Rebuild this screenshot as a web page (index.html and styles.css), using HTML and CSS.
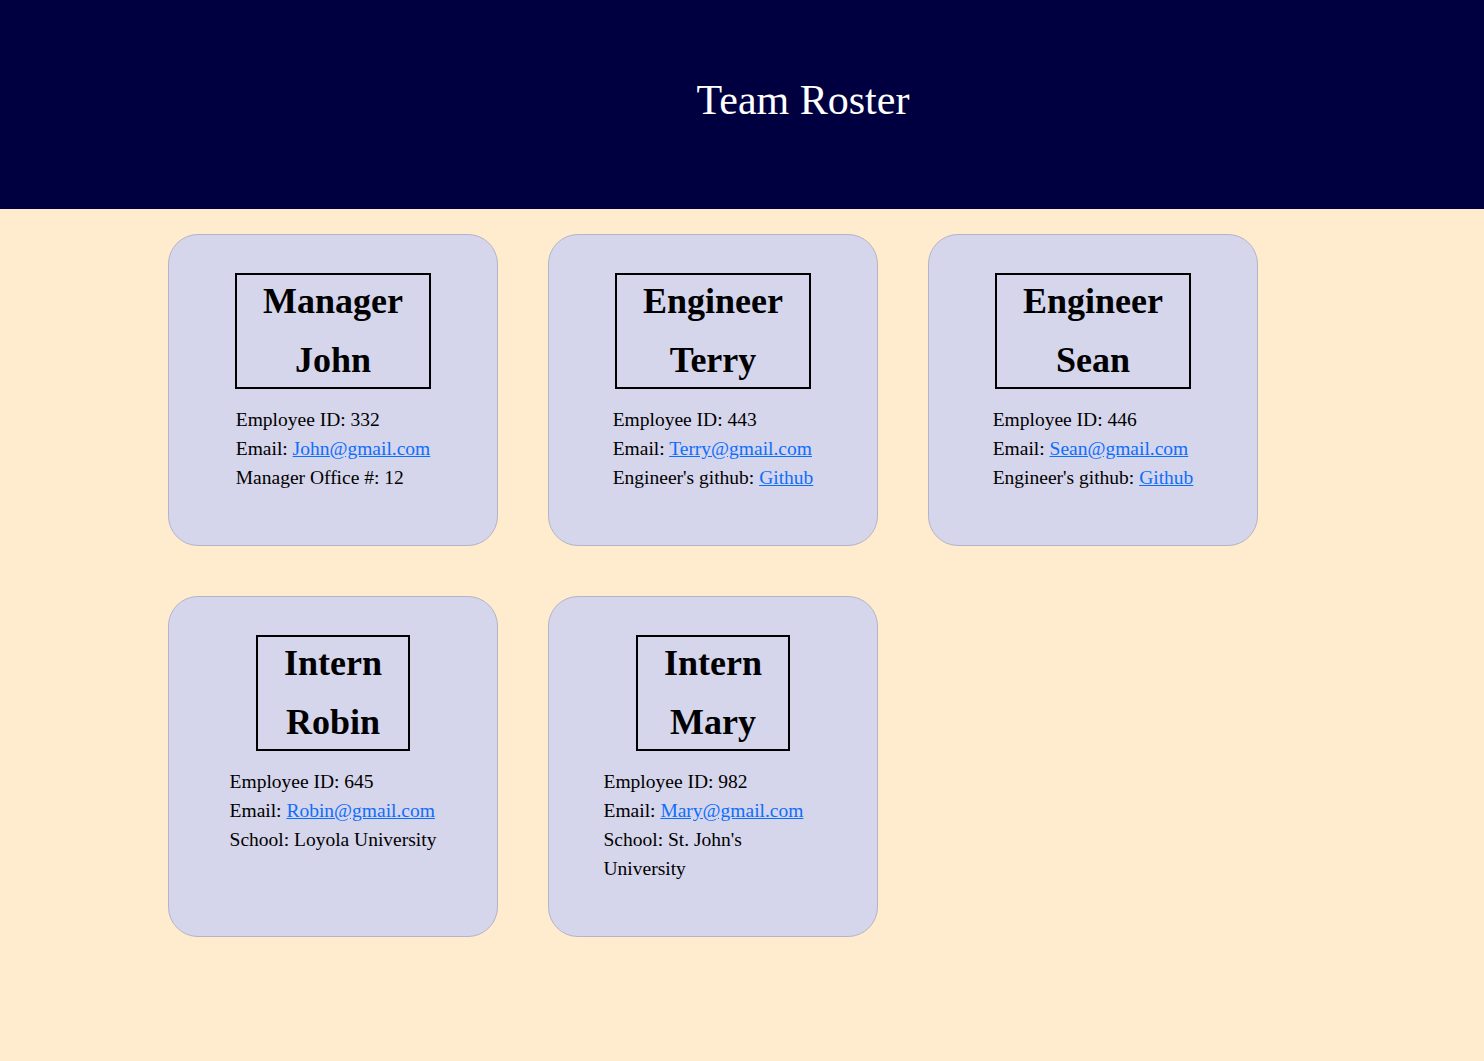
FILE: index.html
```html
<!DOCTYPE html>
<html lang="en">
<head>
<meta charset="utf-8">
<title>Team Roster</title>
<link rel="stylesheet" href="styles.css">
</head>
<body>
<header class="banner">
  <h1 class="banner-title">Team Roster</h1>
</header>
<main class="roster">
  <section class="card">
    <div class="role-box">
      <h2 class="role-line">Manager</h2>
      <h2 class="role-line">John</h2>
    </div>
    <ul class="details">
      <li>Employee ID: 332</li>
      <li>Email: <a href="mailto:John@gmail.com">John@gmail.com</a></li>
      <li>Manager Office #: 12</li>
    </ul>
  </section>
  <section class="card">
    <div class="role-box">
      <h2 class="role-line">Engineer</h2>
      <h2 class="role-line">Terry</h2>
    </div>
    <ul class="details">
      <li>Employee ID: 443</li>
      <li>Email: <a href="mailto:Terry@gmail.com">Terry@gmail.com</a></li>
      <li>Engineer's github: <a href="#">Github</a></li>
    </ul>
  </section>
  <section class="card">
    <div class="role-box">
      <h2 class="role-line">Engineer</h2>
      <h2 class="role-line">Sean</h2>
    </div>
    <ul class="details">
      <li>Employee ID: 446</li>
      <li>Email: <a href="mailto:Sean@gmail.com">Sean@gmail.com</a></li>
      <li>Engineer's github: <a href="#">Github</a></li>
    </ul>
  </section>
  <section class="card">
    <div class="role-box">
      <h2 class="role-line">Intern</h2>
      <h2 class="role-line">Robin</h2>
    </div>
    <ul class="details">
      <li>Employee ID: 645</li>
      <li>Email: <a href="mailto:Robin@gmail.com">Robin@gmail.com</a></li>
      <li>School: Loyola University</li>
    </ul>
  </section>
  <section class="card">
    <div class="role-box">
      <h2 class="role-line">Intern</h2>
      <h2 class="role-line">Mary</h2>
    </div>
    <ul class="details">
      <li>Employee ID: 982</li>
      <li>Email: <a href="mailto:Mary@gmail.com">Mary@gmail.com</a></li>
      <li>School: St. John's University</li>
    </ul>
  </section>
</main>
</body>
</html>
```

FILE: styles.css
```css
html, body {
  margin: 0;
  padding: 0;
}

body {
  background: #ffebcd;
  font-family: "Liberation Serif", "Times New Roman", serif;
  color: #000;
  min-height: 1061px;
}

.banner {
  background: #000040;
  height: 209px;
  box-sizing: border-box;
  padding: 76px 0 0 122px;
  text-align: center;
}

.banner-title {
  margin: 0;
  font-weight: normal;
  font-size: 42px;
  line-height: 48px;
  color: #fff;
}

.roster {
  display: grid;
  grid-template-columns: repeat(3, 330px);
  column-gap: 50px;
  row-gap: 50px;
  padding: 25px 0 0 168px;
}

.card {
  background: #d5d5eb;
  border: 1px solid #b4b4c8;
  border-radius: 30px;
  padding: 38px 10px 53px;
  display: flex;
  flex-direction: column;
  align-items: center;
}

.role-box {
  border: 2px solid #000;
  padding: 0 26px;
  height: 112px;
  text-align: center;
}

.role-line {
  margin: 0;
  font-size: 36px;
  font-weight: bold;
  line-height: 59px;
}

.role-line:first-child {
  margin-top: -3px;
}

.details {
  list-style: none;
  margin: 16px 0 0;
  padding: 0;
  width: fit-content;
  max-width: 219px;
  font-size: 19.5px;
  line-height: 29px;
}

.details a {
  color: #0d6efd;
}
```
